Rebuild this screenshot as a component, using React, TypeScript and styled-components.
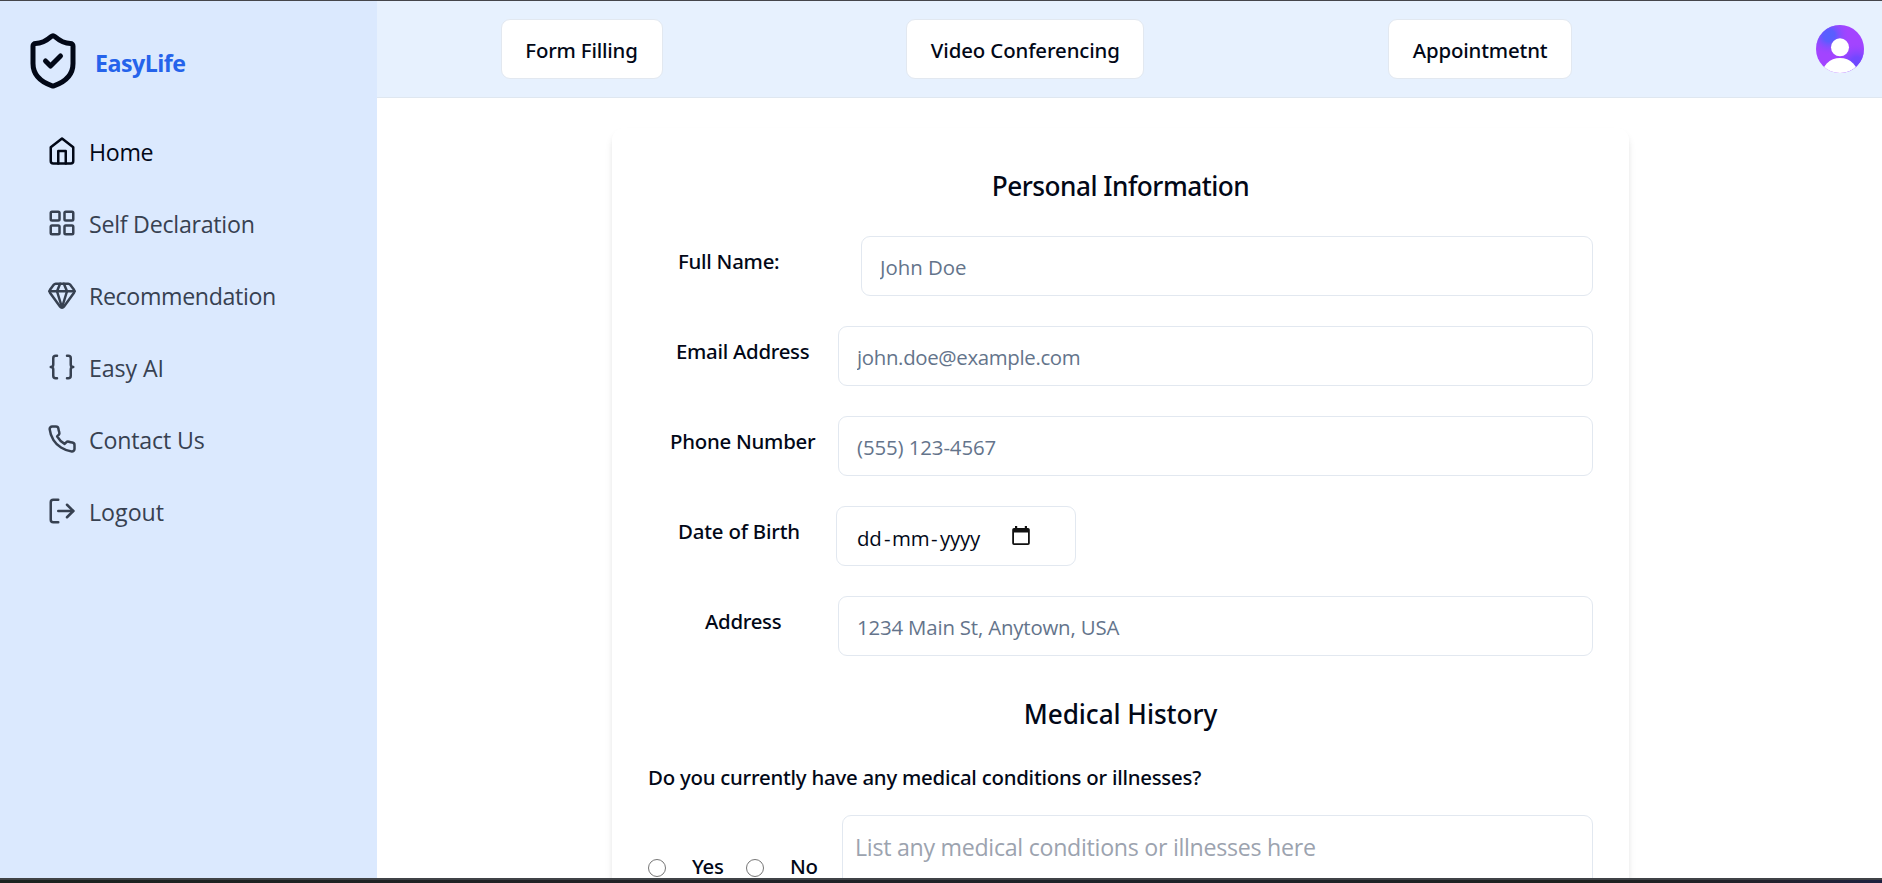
import React from "react";
import styled, { createGlobalStyle } from "styled-components";
import { FiHome, FiPhone } from "react-icons/fi";
import { Braces, Gem, LayoutGrid, LogOut, ShieldCheck } from "lucide-react";

const GlobalStyle = createGlobalStyle`
  *, *::before, *::after { box-sizing: border-box; }
  body { margin: 0; overflow: hidden; background: #fff; }
  input, textarea, button { font: inherit; color: inherit; }
`;

const sans = `"Noto Sans", "Open Sans", sans-serif`;
const light = `"Open Sans", "Noto Sans", sans-serif`;

const Screen = styled.div`
  display: flex;
  flex-direction: column;
  width: 100%;
  height: 883px;
  overflow: hidden;
  font-family: ${sans};
  font-size: 20.4px;
  line-height: 30px;
  color: #020817;
`;

const TopEdge = styled.div`
  flex: none;
  height: 1px;
  background: #45464b;
`;

const BottomEdge = styled.div`
  flex: none;
  height: 5px;
  border-top: 2px solid #404347;
  background: linear-gradient(90deg, #1a231f 0%, #202225 30%, #1c2329 65%, #1c221f 84%, #22222c 94%, #1d2140 100%);
`;

const Body = styled.div`
  display: flex;
  flex: 1;
  min-height: 0;
`;

const Sidebar = styled.aside`
  flex: none;
  width: 377px;
  padding-top: 30px;
  background: #dbe9fe;
`;

const Brand = styled.div`
  display: flex;
  align-items: center;
  height: 60px;
  padding-left: 23px;
  gap: 12px;
`;

const BrandName = styled.span`
  padding-top: 3px;
  font-family: ${light};
  font-size: 23.2px;
  font-weight: 700;
  line-height: 36px;
  letter-spacing: -0.52px;
  color: #2563eb;
`;

const Nav = styled.nav`
  display: flex;
  flex-direction: column;
  padding: 25px 0 0 47px;
`;

const NavItem = styled.a<{ $active?: boolean; $spacing: number }>`
  display: flex;
  align-items: center;
  height: 72px;
  gap: 12px;
  font-family: ${light};
  font-size: 23.2px;
  line-height: 36px;
  letter-spacing: ${(p) => p.$spacing}px;
  color: ${(p) => (p.$active ? "#020817" : "#374151")};

  svg { flex: none; margin-top: -2px; }
`;

const Main = styled.main`
  flex: 1;
  min-width: 0;
`;

const Header = styled.header`
  display: flex;
  align-items: center;
  justify-content: space-between;
  height: 97px;
  padding: 0 18px 0 123.5px;
  border-bottom: 1px solid #dfe7f0;
  background: #e7f1fe;
`;

const HeaderButton = styled.button<{ $width: number; $spacing: number }>`
  width: ${(p) => p.$width}px;
  height: 60px;
  padding: 2px 0 0;
  border: 1px solid #e2e8f0;
  border-radius: 9px;
  background: #fff;
  font-weight: 500;
  line-height: 30px;
  letter-spacing: ${(p) => p.$spacing}px;
`;

const Card = styled.section`
  width: 1017px;
  height: 900px;
  margin: 30px 0 0 235px;
  padding: 37px 36px 36px;
  border-radius: 12px;
  background: #fff;
  box-shadow: 0 6px 9px -1.5px rgba(0, 0, 0, 0.1), 0 3px 6px -3px rgba(0, 0, 0, 0.1);
`;

const Heading = styled.h2<{ $spacing: number }>`
  margin: 0;
  font-size: 26.2px;
  font-weight: 500;
  line-height: 42px;
  text-align: center;
  letter-spacing: ${(p) => p.$spacing}px;
`;

const Fields = styled.div`
  display: flex;
  flex-direction: column;
  gap: 30px;
  margin: 29px 0 37px;
`;

const Field = styled.div<{ $labelWidth: number }>`
  display: grid;
  grid-template-columns: ${(p) => p.$labelWidth}px 1fr;
  height: 60px;
`;

const Label = styled.label<{ $indent: number; $spacing: number }>`
  padding: 10px 0 0 ${(p) => p.$indent}px;
  font-weight: 500;
  white-space: nowrap;
  letter-spacing: ${(p) => p.$spacing}px;
`;

const Input = styled.input<{ $spacing: number }>`
  width: 100%;
  height: 60px;
  padding: 1px 18px 0;
  border: 1px solid #e2e8f0;
  border-radius: 9px;
  background: #fff;
  font-family: ${light};
  letter-spacing: ${(p) => p.$spacing}px;
  outline: none;

  &::placeholder { color: #64748b; opacity: 1; }
`;

const DateBox = styled.div`
  display: flex;
  align-items: center;
  width: 240px;
  height: 60px;
  padding: 3px 19px 0 20px;
  border: 1px solid #e2e8f0;
  border-radius: 9px;
  font-family: ${light};

  svg { margin: -4px 0 0 31px; }
`;

const DatePart = styled.span<{ $width: number }>`
  width: ${(p) => p.$width}px;
  white-space: nowrap;
  letter-spacing: -0.2px;
`;

const Question = styled.p`
  margin: 27px 0 23px;
  font-weight: 500;
  letter-spacing: -0.24px;
`;

const Answer = styled.div`
  display: flex;
`;

const Choices = styled.div`
  display: flex;
  width: 194px;
  height: 30px;
  margin-top: 36px;
`;

const Choice = styled.label<{ $width: number }>`
  display: flex;
  align-items: center;
  width: ${(p) => p.$width}px;
  gap: 26px;
  font-weight: 500;
  letter-spacing: -0.3px;
`;

const Radio = styled.input`
  appearance: none;
  width: 18px;
  height: 18px;
  margin: 4px 0 0;
  border: 1.5px solid #767676;
  border-radius: 50%;
  background: #fff;
`;

const TextArea = styled.textarea`
  flex: 1;
  height: 120px;
  padding: 13px 12px;
  border: 1px solid #e2e8f0;
  border-radius: 9px;
  background: #fff;
  font-family: ${light};
  font-size: 23.2px;
  line-height: 36px;
  letter-spacing: -0.28px;
  resize: none;
  outline: none;

  &::placeholder { color: #9ca3af; opacity: 1; }
`;

function Avatar() {
  return (
    <svg width="48" height="48" viewBox="0 0 48 48">
      <defs>
        <clipPath id="round"><circle cx="24" cy="24" r="24" /></clipPath>
        <radialGradient id="glow" cx="0.27" cy="0.22" r="0.42">
          <stop offset="0" stopColor="#5560ff" />
          <stop offset="0.3" stopColor="#5c5cff" />
          <stop offset="1" stopColor="#a044ff" stopOpacity="0" />
        </radialGradient>
        <radialGradient id="shade" cx="0.85" cy="0.8" r="0.45">
          <stop offset="0" stopColor="#6c47ff" />
          <stop offset="0.3" stopColor="#7447ff" />
          <stop offset="1" stopColor="#a044ff" stopOpacity="0" />
        </radialGradient>
      </defs>
      <g clipPath="url(#round)">
        <rect width="48" height="48" fill="#a344ff" />
        <rect width="48" height="48" fill="url(#glow)" />
        <rect width="48" height="48" fill="url(#shade)" />
        <circle cx="24" cy="22.3" r="9" fill="#fff" />
        <circle cx="24" cy="51.6" r="18.7" fill="#fff" />
      </g>
    </svg>
  );
}

function CalendarIcon() {
  return (
    <svg width="18" height="20" viewBox="0 0 18 20">
      <path
        fill="#111"
        fillRule="evenodd"
        d="M3 0h2.2v2h7.6V0H15v2h1a1.8 1.8 0 0 1 1.8 1.8v13.4A1.8 1.8 0 0 1 16 19H2a1.8 1.8 0 0 1-1.8-1.8V3.8A1.8 1.8 0 0 1 2 2h1zM2 6.6v10.6h14V6.6z"
      />
    </svg>
  );
}

const fields = [
  { id: "name", label: "Full Name:", indent: 30, labelSpacing: -0.25, width: 213, hint: "John Doe", spacing: 0 },
  { id: "email", label: "Email Address", indent: 28, labelSpacing: -0.28, width: 190, hint: "john.doe@example.com", spacing: -0.33 },
  { id: "phone", label: "Phone Number", indent: 22, labelSpacing: -0.25, width: 190, hint: "(555) 123-4567", spacing: -0.1 },
  { id: "birth", label: "Date of Birth", indent: 30, labelSpacing: -0.2, width: 188, hint: "", spacing: 0 },
  { id: "address", label: "Address", indent: 57, labelSpacing: -0.3, width: 190, hint: "1234 Main St, Anytown, USA", spacing: -0.17 },
];

export default function App() {
  return (
    <Screen>
      <GlobalStyle />
      <TopEdge />
      <Body>
        <Sidebar>
          <Brand>
            <ShieldCheck size={60} />
            <BrandName>EasyLife</BrandName>
          </Brand>
          <Nav>
            <NavItem $active $spacing={-0.3}><FiHome size={30} />Home</NavItem>
            <NavItem $spacing={-0.26}><LayoutGrid size={30} />Self Declaration</NavItem>
            <NavItem $spacing={-0.36}><Gem size={30} />Recommendation</NavItem>
            <NavItem $spacing={-0.1}><Braces size={30} />Easy AI</NavItem>
            <NavItem $spacing={-0.17}><FiPhone size={30} />Contact Us</NavItem>
            <NavItem $spacing={0}><LogOut size={30} />Logout</NavItem>
          </Nav>
        </Sidebar>
        <Main>
          <Header>
            <HeaderButton $width={162} $spacing={-0.2}>Form Filling</HeaderButton>
            <HeaderButton $width={238} $spacing={-0.11}>Video Conferencing</HeaderButton>
            <HeaderButton $width={184} $spacing={-0.17}>Appointmetnt</HeaderButton>
            <Avatar />
          </Header>
          <Card>
            <Heading $spacing={-0.5}>Personal Information</Heading>
            <Fields>
              {fields.map((f) => (
                <Field key={f.id} $labelWidth={f.width}>
                  <Label htmlFor={f.id} $indent={f.indent} $spacing={f.labelSpacing}>{f.label}</Label>
                  {f.id === "birth" ? (
                    <DateBox>
                      <DatePart $width={27}>dd</DatePart>
                      <DatePart $width={8}>-</DatePart>
                      <DatePart $width={39}>mm</DatePart>
                      <DatePart $width={9}>-</DatePart>
                      <DatePart $width={41}>yyyy</DatePart>
                      <CalendarIcon />
                    </DateBox>
                  ) : (
                    <Input id={f.id} placeholder={f.hint} $spacing={f.spacing} />
                  )}
                </Field>
              ))}
            </Fields>
            <Heading $spacing={-0.05}>Medical History</Heading>
            <Question>Do you currently have any medical conditions or illnesses?</Question>
            <Answer>
              <Choices>
                <Choice $width={98}><Radio type="radio" name="illness" />Yes</Choice>
                <Choice $width={96}><Radio type="radio" name="illness" />No</Choice>
              </Choices>
              <TextArea placeholder="List any medical conditions or illnesses here" />
            </Answer>
          </Card>
        </Main>
      </Body>
      <BottomEdge />
    </Screen>
  );
}
